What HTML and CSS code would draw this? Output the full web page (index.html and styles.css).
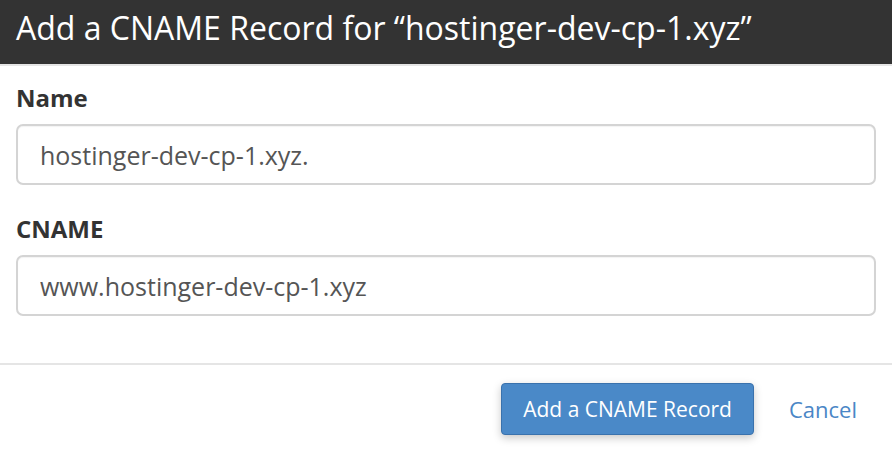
FILE: index.html
```html
<!DOCTYPE html>
<html lang="en">
<head>
  <meta charset="UTF-8">
  <meta name="viewport" content="width=device-width, initial-scale=1.0">
  <title>Add a CNAME Record</title>
  <link rel="stylesheet" href="styles.css">
</head>
<body>
  <div class="modal">
    <div class="modal-header">Add a CNAME Record for “hostinger-dev-cp-1.xyz”</div>
    <form class="modal-body" id="cnameForm">
      <div class="form-group">
        <label for="name">Name</label>
        <input type="text" id="name" value="hostinger-dev-cp-1.xyz.">
      </div>
      <div class="form-group">
        <label for="cname">CNAME</label>
        <input type="text" id="cname" value="www.hostinger-dev-cp-1.xyz">
      </div>
    </form>
    <div class="modal-footer">
      <button type="submit" form="cnameForm" class="btn btn-primary">Add a CNAME Record</button>
      <button type="button" class="btn-link">Cancel</button>
    </div>
  </div>
</body>
</html>
```

FILE: styles.css
```css
body {
  margin: 0;
  font-family: "Open Sans", "Liberation Sans", Arial, sans-serif;
  background: #fff;
  color: #333;
}
.modal {
  width: 892px;
  height: 454px;
  overflow: hidden;
}
.modal-header {
  background: #333;
  color: #fff;
  font-size: 32px;
  line-height: 56px;
  height: 56px;
  padding: 0 16px 8px;
  border-bottom: 2px solid #e5e5e5;
  white-space: nowrap;
}
.modal-body {
  padding: 15px 16px 47px;
}
.form-group {
  margin-bottom: 27px;
}
.form-group:last-child {
  margin-bottom: 0;
}
.form-group label {
  display: block;
  font-size: 24px;
  font-weight: bold;
  line-height: 33px;
  margin-bottom: 10px;
  color: #333;
}
.form-group input {
  display: block;
  box-sizing: border-box;
  width: 100%;
  height: 61px;
  padding: 0 22px;
  font-family: inherit;
  font-size: 25px;
  color: #555;
  border: 2px solid #d4d4d4;
  border-radius: 7px;
  box-shadow: inset 0 1px 1px rgba(0, 0, 0, 0.05);
  outline: none;
}
.modal-footer {
  border-top: 2px solid #e5e5e5;
  padding: 18px 35px 0 16px;
  display: flex;
  justify-content: flex-end;
  align-items: center;
  gap: 35px;
}
.btn {
  font-family: inherit;
  font-size: 21px;
  height: 52px;
  padding: 0 21px;
  border-radius: 4px;
  cursor: pointer;
}
.btn-primary {
  background: #4a89c8;
  color: #fff;
  border: 1px solid #3a72ad;
  box-shadow: 0 3px 8px rgba(0, 0, 0, 0.22);
}
.btn-primary:hover {
  background: #4280bf;
}
.btn-link {
  font-family: inherit;
  font-size: 22px;
  background: none;
  border: none;
  padding: 0;
  color: #4a86c6;
  cursor: pointer;
}
```
